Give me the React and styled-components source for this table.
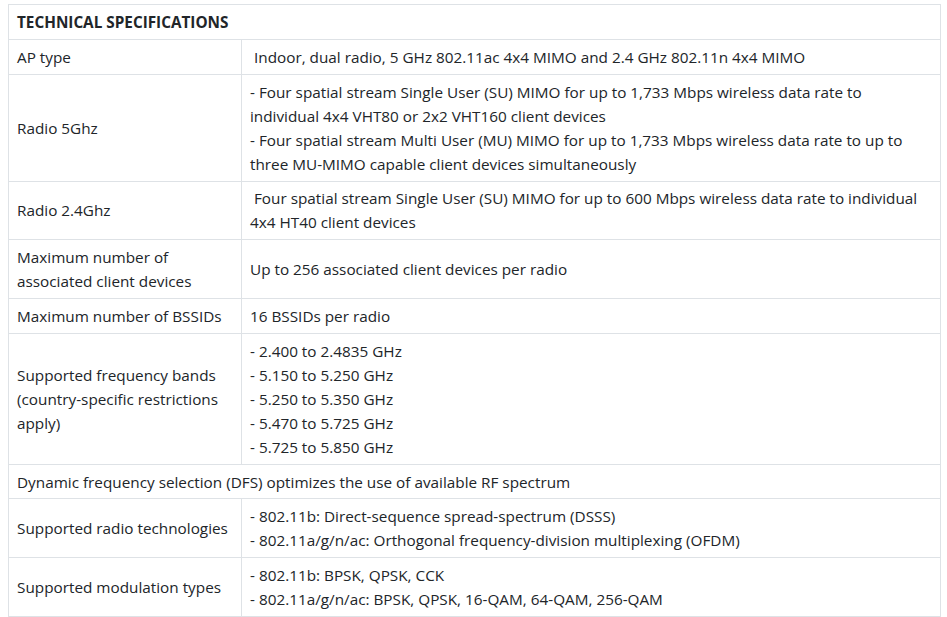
import React from 'react'
import styled, { createGlobalStyle } from 'styled-components'

const GlobalStyle = createGlobalStyle`
body {
  margin: 0;
  background: #ffffff;
  font-family: "Open Sans", "Noto Sans", sans-serif;
  color: #212529;
}
`

const Page = styled.div`
padding: 4px 6px 0 8px;
`

const SpecTable = styled.table`
width: 933px;
border-collapse: collapse;
font-size: 15.3px;
line-height: 24px;
`

const HeadCell = styled.th`
text-align: left;
font-weight: 700;
padding: 5px 8px;
border: 1px solid #dee2e6;
`

const Cell = styled.td`
padding: 4.9px 8px;
border: 1px solid #dee2e6;
vertical-align: middle;
width: ${props => props.label ? '216px' : 'auto'};
`

const specs = [
  { label: 'AP type', lines: ['\u00a0Indoor, dual radio, 5 GHz 802.11ac 4x4 MIMO and 2.4 GHz 802.11n 4x4 MIMO'] },
  {
    label: 'Radio 5Ghz',
    lines: [
      '- Four spatial stream Single User (SU) MIMO for up to 1,733 Mbps wireless data rate to individual 4x4 VHT80 or 2x2 VHT160 client devices',
      '- Four spatial stream Multi User (MU) MIMO for up to 1,733 Mbps wireless data rate to up to three MU-MIMO capable client devices simultaneously'
    ]
  },
  { label: 'Radio 2.4Ghz', lines: ['\u00a0Four spatial stream Single User (SU) MIMO for up to 600 Mbps wireless data rate to individual 4x4 HT40 client devices'] },
  { label: 'Maximum number of associated client devices', lines: ['Up to 256 associated client devices per radio'] },
  { label: 'Maximum number of BSSIDs', lines: ['16 BSSIDs per radio'] },
  {
    label: 'Supported frequency bands (country-specific restrictions apply)',
    lines: ['- 2.400 to 2.4835 GHz', '- 5.150 to 5.250 GHz', '- 5.250 to 5.350 GHz', '- 5.470 to 5.725 GHz', '- 5.725 to 5.850 GHz']
  },
  { full: 'Dynamic frequency selection (DFS) optimizes the use of available RF spectrum' },
  {
    label: 'Supported radio technologies',
    lines: ['- 802.11b: Direct-sequence spread-spectrum (DSSS)', '- 802.11a/g/n/ac: Orthogonal frequency-division multiplexing (OFDM)']
  },
  {
    label: 'Supported modulation types',
    lines: ['- 802.11b: BPSK, QPSK, CCK', '- 802.11a/g/n/ac: BPSK, QPSK, 16-QAM, 64-QAM, 256-QAM']
  },
  { label: '\u00a0', lines: ['\u00a0'] }
]

const Line = styled.div``

export default function App() {
  return (
    <Page>
      <GlobalStyle />
      <SpecTable>
        <thead>
          <tr>
            <HeadCell colSpan={2}>TECHNICAL SPECIFICATIONS</HeadCell>
          </tr>
        </thead>
        <tbody>
          {specs.map((row, i) =>
            row.full ? (
              <tr key={i}>
                <Cell colSpan={2}>{row.full}</Cell>
              </tr>
            ) : (
              <tr key={i}>
                <Cell label="1">{row.label}</Cell>
                <Cell>
                  {row.lines.map((l, j) => <Line key={j}>{l}</Line>)}
                </Cell>
              </tr>
            )
          )}
        </tbody>
      </SpecTable>
    </Page>
  )
}
